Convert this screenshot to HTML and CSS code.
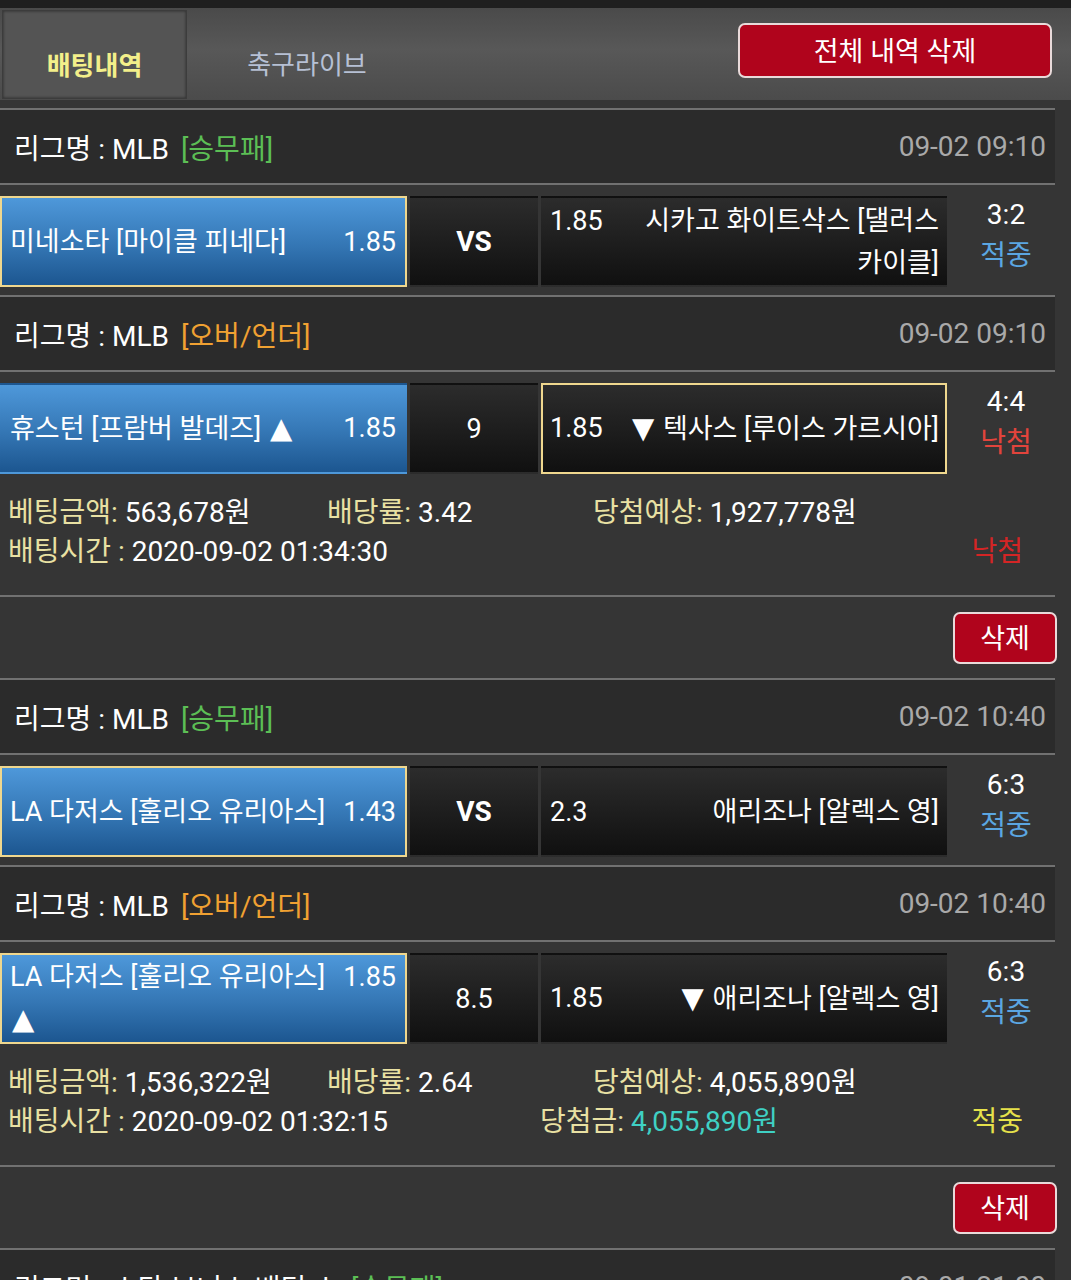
FILE: index.html
```html
<!DOCTYPE html>
<html lang="ko">
<head>
  <meta charset="UTF-8">
  <meta name="viewport" content="width=device-width, initial-scale=1.0">
  <title>배팅내역</title>
  <link rel="stylesheet" href="styles.css">
</head>
<body>
  <div class="topbar">
    <div class="tabs">
      <a class="tab active">배팅내역</a>
      <a class="tab tab-live">축구라이브</a>
    </div>
    <button class="btn-del-all">전체 내역 삭제</button>
  </div>

  <div class="list">
    <!-- bet 1 -->
    <div class="bet">
      <div class="league">
        <span>리그명 : MLB<span class="type win">[승무패]</span></span>
        <span class="date">09-02 09:10</span>
      </div>
      <div class="match">
        <div class="cell home picked"><div class="txt"><span class="odds">1.85</span>미네소타 [마이클 피네다]</div></div>
        <div class="cell mid"><b>VS</b></div>
        <div class="cell away"><div class="txt"><span class="odds">1.85</span>시카고 화이트삭스 [댈러스 카이클]</div></div>
        <div class="score"><span>3:2</span><span class="hit">적중</span></div>
      </div>
      <div class="league">
        <span>리그명 : MLB<span class="type ou">[오버/언더]</span></span>
        <span class="date">09-02 09:10</span>
      </div>
      <div class="match">
        <div class="cell home"><div class="txt"><span class="odds">1.85</span>휴스턴 [프람버 발데즈] <span class="arr">▲</span></div></div>
        <div class="cell mid">9</div>
        <div class="cell away picked"><div class="txt"><span class="odds">1.85</span><span class="arr">▼</span> 텍사스 [루이스 가르시아]</div></div>
        <div class="score"><span>4:4</span><span class="miss">낙첨</span></div>
      </div>
      <div class="info">
        <div class="info-row">
          <span><em>베팅금액:</em> 563,678원</span>
          <span><em>배당률:</em> 3.42</span>
          <span><em>당첨예상:</em> 1,927,778원</span>
        </div>
        <div class="info-row second">
          <span><em>배팅시간 :</em> 2020-09-02 01:34:30</span>
          <span></span>
          <span class="result lost">낙첨</span>
        </div>
      </div>
      <div class="del-row"><button class="btn-del">삭제</button></div>
    </div>

    <!-- bet 2 -->
    <div class="bet">
      <div class="league">
        <span>리그명 : MLB<span class="type win">[승무패]</span></span>
        <span class="date">09-02 10:40</span>
      </div>
      <div class="match">
        <div class="cell home picked"><div class="txt"><span class="odds">1.43</span>LA 다저스 [훌리오 유리아스]</div></div>
        <div class="cell mid"><b>VS</b></div>
        <div class="cell away"><div class="txt"><span class="odds">2.3</span>애리조나 [알렉스 영]</div></div>
        <div class="score"><span>6:3</span><span class="hit">적중</span></div>
      </div>
      <div class="league">
        <span>리그명 : MLB<span class="type ou">[오버/언더]</span></span>
        <span class="date">09-02 10:40</span>
      </div>
      <div class="match">
        <div class="cell home picked"><div class="txt"><span class="odds">1.85</span>LA 다저스 [훌리오 유리아스] <span class="arr">▲</span></div></div>
        <div class="cell mid">8.5</div>
        <div class="cell away"><div class="txt"><span class="odds">1.85</span><span class="arr">▼</span> 애리조나 [알렉스 영]</div></div>
        <div class="score"><span>6:3</span><span class="hit">적중</span></div>
      </div>
      <div class="info">
        <div class="info-row">
          <span><em>베팅금액:</em> 1,536,322원</span>
          <span><em>배당률:</em> 2.64</span>
          <span><em>당첨예상:</em> 4,055,890원</span>
        </div>
        <div class="info-row second">
          <span><em>배팅시간 :</em> 2020-09-02 01:32:15</span>
          <span><em>당첨금:</em> <span class="prize">4,055,890원</span></span>
          <span class="result won">적중</span>
        </div>
      </div>
      <div class="del-row"><button class="btn-del">삭제</button></div>
    </div>

    <!-- bet 3 -->
    <div class="bet">
      <div class="league">
        <span>리그명 : 스타 보너스 배팅 스<span class="type win">[승무패]</span></span>
        <span class="date">09-01 21:00</span>
      </div>
    </div>
  </div>
</body>
</html>
```

FILE: styles.css
```css
* {
  box-sizing: border-box;
}

body {
  margin: 0;
  background: #353535;
  color: #fff;
  font-family: Roboto, "Noto Sans CJK KR", sans-serif;
  font-size: 28px;
}

.topbar {
  height: 100px;
  border-top: 8px solid #1f1f1f;
  margin-bottom: 8px;
  padding: 0 19px 0 2px;
  display: flex;
  justify-content: space-between;
  align-items: center;
  background: linear-gradient(180deg, #4a4a4a, #585858 45%, #4b4b4b);
}

.tabs {
  display: flex;
  align-self: stretch;
  padding: 2px 0 1px;
}

.tab {
  width: 185px;
  display: flex;
  justify-content: center;
  padding-top: 40px;
  font-size: 26px;
  line-height: 30px;
  color: #b6c0d4;
}

.tab.active {
  background: #545454;
  box-shadow: inset 0 0 3px #2a2a2a;
  border: 1px solid #3c3c3c;
  color: #f3ef8a;
  font-weight: bold;
}

.tab-live {
  width: 240px;
}

.btn-del-all {
  width: 314px;
  height: 55px;
  margin-top: -7px;
  padding: 0 0 3px;
  background: #b0041c;
  border: 2px solid #e9dada;
  border-radius: 7px;
  color: #fff;
  font-family: inherit;
  font-size: 27px;
}

.list {
  width: 1055px;
}

.league {
  height: 77px;
  border-top: 2px solid #717171;
  border-bottom: 2px solid #717171;
  background: #2b2b2b;
  padding: 0 9px 0 14px;
  display: flex;
  justify-content: space-between;
  align-items: center;
}

.type {
  margin-left: 12px;
}

.type.win {
  color: #5cbf55;
}

.type.ou {
  color: #f0a132;
}

.date {
  color: #a9a9a9;
}

.match {
  display: grid;
  grid-template-columns: 407px 128px 406px 1fr;
  column-gap: 3px;
  padding: 11px 0 8px;
}

.cell {
  height: 91px;
  display: flex;
  align-items: center;
  border: 2px solid transparent;
  font-size: 27px;
  line-height: 42px;
}

.cell.picked {
  border-color: #efd78e;
}

.home {
  padding: 0 9px 0 8px;
  background: linear-gradient(180deg, #4e98da, #3476b4 55%, #1c5690);
}

.mid,
.away {
  background: linear-gradient(180deg, #2c2c2c, #101010);
}

.mid {
  justify-content: center;
}

.mid b {
  font-size: 28px;
}

.away {
  padding: 0 6px 0 7px;
}

.txt {
  width: 100%;
}

.arr {
  font-family: "DejaVu Sans", sans-serif;
  font-size: 29px;
  margin: 0 2px;
}

.home .odds {
  float: right;
  margin-left: 10px;
}

.away .txt {
  text-align: right;
}

.away .odds {
  float: left;
  margin-right: 12px;
}

.score {
  display: flex;
  flex-direction: column;
  align-items: center;
  padding-left: 7px;
  margin-top: -2px;
  line-height: 41px;
}

.hit {
  color: #5ba6e2;
}

.miss {
  color: #e2443c;
}

.info {
  height: 113px;
  padding: 11px 0 0 8px;
  line-height: 39px;
}

.info-row {
  display: grid;
  grid-template-columns: 319px 266px 1fr;
}

.info-row.second {
  grid-template-columns: 532px 1fr auto;
}

.info em {
  font-style: normal;
  color: #e9e1a3;
}

.prize {
  color: #3fd0c4;
}

.result {
  padding-right: 32px;
}

.result.lost {
  color: #d42525;
}

.result.won {
  color: #e6e14b;
}

.del-row {
  height: 83px;
  border-top: 2px solid #717171;
  display: flex;
  justify-content: flex-end;
  align-items: center;
}

.btn-del {
  width: 104px;
  height: 52px;
  margin-right: -2px;
  padding: 0 0 3px;
  background: #b0041c;
  border: 2px solid #e9dada;
  border-radius: 7px;
  color: #fff;
  font-family: inherit;
  font-size: 27px;
}
```
